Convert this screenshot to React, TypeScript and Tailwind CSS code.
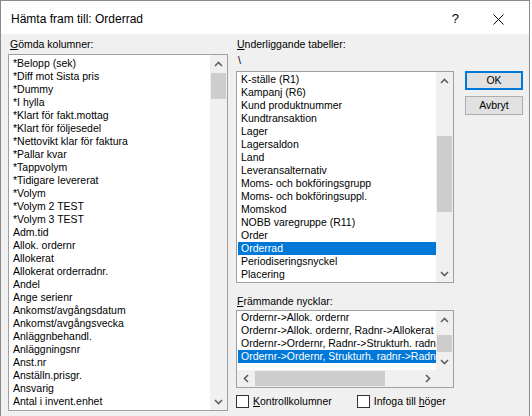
import React from "react";

const Up = () => (
  <svg width="9" height="6" viewBox="0 0 9 6"><polyline points="1,5 4.5,1.5 8,5" fill="none" stroke="#606060" strokeWidth="1.6" /></svg>
);
const Down = () => (
  <svg width="9" height="6" viewBox="0 0 9 6"><polyline points="1,1 4.5,4.5 8,1" fill="none" stroke="#606060" strokeWidth="1.6" /></svg>
);
const Left = () => (
  <svg width="6" height="9" viewBox="0 0 6 9"><polyline points="5,1 1.5,4.5 5,8" fill="none" stroke="#606060" strokeWidth="1.6" /></svg>
);
const Right = () => (
  <svg width="6" height="9" viewBox="0 0 6 9"><polyline points="1,1 4.5,4.5 1,8" fill="none" stroke="#606060" strokeWidth="1.6" /></svg>
);

function VScroll({ before, thumb }: { before: number; thumb: number }) {
  return (
    <div className="w-[17px] h-full bg-[#f0f0f0] flex flex-col shrink-0">
      <div className="h-[17px] flex items-center justify-center shrink-0"><Up /></div>
      <div className="flex-1 flex flex-col">
        <div style={{ height: before }} className="shrink-0" />
        <div style={{ height: thumb }} className="mx-[1px] bg-[#cdcdcd] shrink-0" />
      </div>
      <div className="h-[17px] flex items-center justify-center shrink-0"><Down /></div>
    </div>
  );
}

function Rows({ items, selected, top }: { items: string[]; selected?: number; top: string }) {
  return (
    <div className={"flex-1 overflow-hidden flex flex-col pl-[1px] " + top}>
      {items.map((t, i) => (
        <div
          key={i}
          className={
            "h-[13px] leading-[13px] pl-[3px] whitespace-nowrap shrink-0 " +
            (i === selected ? "bg-[#0078d7] text-white" : "text-black")
          }
        >
          {t}
        </div>
      ))}
    </div>
  );
}

const hidden = [
  "*Belopp (sek)",
  "*Diff mot Sista pris",
  "*Dummy",
  "*I hylla",
  "*Klart för fakt.mottag",
  "*Klart för följesedel",
  "*Nettovikt klar för faktura",
  "*Pallar kvar",
  "*Tappvolym",
  "*Tidigare levererat",
  "*Volym",
  "*Volym 2 TEST",
  "*Volym 3 TEST",
  "Adm.tid",
  "Allok. ordernr",
  "Allokerat",
  "Allokerat orderradnr.",
  "Andel",
  "Ange serienr",
  "Ankomst/avgångsdatum",
  "Ankomst/avgångsvecka",
  "Anläggnbehandl.",
  "Anläggningsnr",
  "Anst.nr",
  "Anställn.prisgr.",
  "Ansvarig",
  "Antal i invent.enhet",
];

const tables = [
  "K-ställe (R1)",
  "Kampanj (R6)",
  "Kund produktnummer",
  "Kundtransaktion",
  "Lager",
  "Lagersaldon",
  "Land",
  "Leveransalternativ",
  "Moms- och bokföringsgrupp",
  "Moms- och bokföringsuppl.",
  "Momskod",
  "NOBB varegruppe (R11)",
  "Order",
  "Orderrad",
  "Periodiseringsnyckel",
  "Placering",
];

const keys = [
  "Ordernr->Allok. ordernr",
  "Ordernr->Allok. ordernr, Radnr->Allokerat orderradnr.",
  "Ordernr->Ordernr, Radnr->Strukturh. radnr",
  "Ordernr->Ordernr, Strukturh. radnr->Radnr",
];

export default function App() {
  return (
    <div className="w-[532px] h-[416px] overflow-hidden bg-white font-['Liberation_Sans',Arial,sans-serif] text-[10.5px] text-black">
      <div className="w-[530px] h-[416px] border-l border-r border-t border-[#8a8a8a] flex flex-col">
        {/* Title bar */}
        <div className="h-[33px] bg-white flex items-center pt-[3px] shrink-0">
          <div className="ml-[10px] text-[12px] text-black">Hämta fram till: Orderrad</div>
          <div className="ml-auto text-[13px] text-black mr-[34px]">?</div>
          <div className="mr-[25px] flex items-center">
            <svg width="11" height="11" viewBox="0 0 11 11">
              <line x1="0.5" y1="0.5" x2="10.5" y2="10.5" stroke="#000" strokeWidth="1" />
              <line x1="10.5" y1="0.5" x2="0.5" y2="10.5" stroke="#000" strokeWidth="1" />
            </svg>
          </div>
        </div>
        {/* Body */}
        <div className="flex-1 bg-[#f0f0f0] flex pl-[7px] pt-[4px]">
          {/* Left column */}
          <div className="w-[220px] flex flex-col shrink-0">
            <div className="h-[13px] leading-[13px] pl-[2px]">
              <span className="underline">G</span>ömda kolumner:
            </div>
            <div className="mt-[3px] h-[357px] border border-[#a0a0a0] bg-white flex">
              <Rows items={hidden} top="pt-[2px]" />
              <VScroll before={1} thumb={26} />
            </div>
          </div>
          {/* Right column */}
          <div className="ml-[8px] w-[218px] flex flex-col shrink-0">
            <div className="h-[13px] leading-[13px] pl-[1px]">
              <span className="underline">U</span>nderliggande tabeller:
            </div>
            <div className="mt-[3px] h-[13px] leading-[13px] pl-[2px]">\</div>
            <div className="mt-[4px] h-[212px] border border-[#a0a0a0] bg-white flex">
              <Rows items={tables} selected={13} top="pt-[1px]" />
              <VScroll before={47} thumb={76} />
            </div>
            <div className="mt-[12px] h-[13px] leading-[13px] pl-[1px]">
              <span className="underline">F</span>rämmande nycklar:
            </div>
            <div className="mt-[2px] h-[78px] border border-[#a0a0a0] bg-white flex flex-col">
              <div className="h-[59px] flex">
                <Rows items={keys} selected={3} top="pt-0" />
                <VScroll before={7} thumb={17} />
              </div>
              <div className="h-[17px] flex bg-[#f0f0f0]">
                <div className="flex-1 flex">
                  <div className="w-[17px] flex items-center justify-center shrink-0"><Left /></div>
                  <div className="w-[1px] shrink-0" />
                  <div className="w-[130px] h-[15px] my-[1px] bg-[#cdcdcd] shrink-0" />
                  <div className="flex-1" />
                  <div className="w-[17px] flex items-center justify-center shrink-0"><Right /></div>
                </div>
                <div className="w-[17px] shrink-0" />
              </div>
            </div>
            <div className="mt-[6px] h-[14px] flex items-center">
              <div className="w-[13px] h-[13px] border border-[#333] bg-white shrink-0" />
              <div className="ml-[4px] leading-[13px]">
                <span className="underline">K</span>ontrollkolumner
              </div>
              <div className="ml-[25px] w-[13px] h-[13px] border border-[#333] bg-white shrink-0" />
              <div className="ml-[4px] leading-[13px]">
                Infoga till <span className="underline">h</span>öger
              </div>
            </div>
          </div>
          {/* Buttons */}
          <div className="ml-[11px] w-[58px] flex flex-col shrink-0">
            <div className="mt-[33px] h-[19px] border-2 border-[#0078d7] bg-[#e1e1e1] flex items-center justify-center">
              OK
            </div>
            <div className="mt-[6px] h-[19px] border border-[#adadad] bg-[#e1e1e1] flex items-center justify-center">
              Avbryt
            </div>
          </div>
        </div>
      </div>
    </div>
  );
}
